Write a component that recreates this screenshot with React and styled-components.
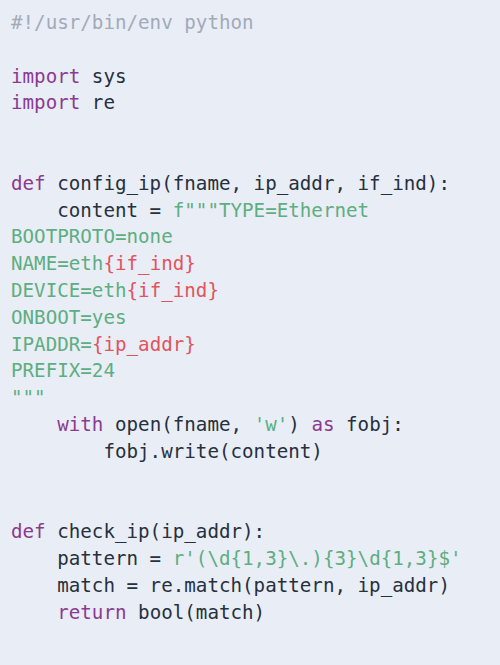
import styled, { createGlobalStyle } from "styled-components";

const Global = createGlobalStyle`
  html, body {
    margin: 0;
    padding: 0;
    background: #e9edf6;
  }
`;

const colors = {
  plain: "#27303d",
  comment: "#a2aab8",
  keyword: "#8b3a8f",
  string: "#5dae80",
  interp: "#e0555c",
};

const Page = styled.div`
  min-height: 665px;
  background: #e9edf6;
  padding: 10px 0 0 11px;
  box-sizing: border-box;
`;

const Code = styled.pre`
  margin: 0;
  font-family: "DejaVu Sans Mono", "Liberation Mono", monospace;
  font-size: 19.2px;
  line-height: 26.8px;
  color: ${colors.plain};
`;

const Line = styled.div`
  height: 26.8px;
  white-space: pre;
`;

const Tok = styled.span`
  color: ${(p) => colors[p.$kind] || colors.plain};
`;

const K = ({ children }) => <Tok $kind="keyword">{children}</Tok>;
const S = ({ children }) => <Tok $kind="string">{children}</Tok>;
const I = ({ children }) => <Tok $kind="interp">{children}</Tok>;

const lines = [
  <Tok $kind="comment">#!/usr/bin/env python</Tok>,
  null,
  <><K>import</K> sys</>,
  <><K>import</K> re</>,
  null,
  null,
  <><K>def</K> config_ip(fname, ip_addr, if_ind):</>,
  <>    content = <S>f"""TYPE=Ethernet</S></>,
  <S>BOOTPROTO=none</S>,
  <><S>NAME=eth</S><I>{"{if_ind}"}</I></>,
  <><S>DEVICE=eth</S><I>{"{if_ind}"}</I></>,
  <S>ONBOOT=yes</S>,
  <><S>IPADDR=</S><I>{"{ip_addr}"}</I></>,
  <S>PREFIX=24</S>,
  <S>"""</S>,
  <>    <K>with</K> open(fname, <S>'w'</S>) <K>as</K> fobj:</>,
  <>        fobj.write(content)</>,
  null,
  null,
  <><K>def</K> check_ip(ip_addr):</>,
  <>    pattern = <S>r'(\d{"{1,3}"}\.){"{3}"}\d{"{1,3}"}$'</S></>,
  <>    match = re.match(pattern, ip_addr)</>,
  <>    <K>return</K> bool(match)</>,
];

export default function App() {
  return (
    <>
      <Global />
      <Page>
        <Code>
          {lines.map((l, i) => (
            <Line key={i}>{l}</Line>
          ))}
        </Code>
      </Page>
    </>
  );
}
